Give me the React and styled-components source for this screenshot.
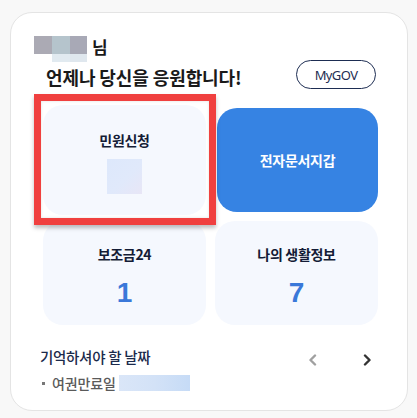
import React from "react";
import styled, { createGlobalStyle } from "styled-components";

const Global = createGlobalStyle`
  html, body { margin: 0; padding: 0; background: #f8f8f8; }
  body { font-family: "Noto Sans CJK KR", "Noto Sans", sans-serif; }
  * { box-sizing: border-box; }
`;

const Page = styled.div`
  width: 417px;
  height: 418px;
  padding: 12px 9px 7px 10px;
`;

const Card = styled.div`
  position: relative;
  width: 398px;
  height: 399px;
  background: #fff;
  border: 1px solid #e4e4e4;
  border-radius: 22px;
  padding: 23px 31px 0 31px;
`;

const Header = styled.div`
  display: flex;
  justify-content: space-between;
  align-items: flex-end;
  height: 53px;
`;

const Greeting = styled.div`
  display: flex;
  flex-direction: column;
  align-items: flex-start;
  gap: 3px;
`;

const NameLine = styled.div`
  display: flex;
  align-items: flex-start;
  height: 26px;
  margin-left: -8px;
`;

const Mosaic = styled.div`
  display: grid;
  grid-template-columns: repeat(3, 18px);
  grid-template-rows: 18px 8px;
  width: 53px;
  overflow: hidden;
`;

const Px = styled.div`
  background: ${(p) => p.$c};
`;

const Nim = styled.span`
  font-size: 17px;
  font-weight: 700;
  color: #1a1a1a;
  line-height: 20px;
  margin-left: 5px;
  margin-top: 1px;
`;

const Title = styled.div`
  font-size: 18px;
  font-weight: 700;
  color: #1a1a1a;
  line-height: 24px;
  letter-spacing: -0.1px;
  margin-left: 4px;
`;

const MyGov = styled.button`
  width: 80px;
  height: 29px;
  border: 1.5px solid #1d2d52;
  border-radius: 15px;
  background: #fff;
  color: #1d2d52;
  font-family: "Noto Sans", sans-serif;
  font-size: 13px;
  letter-spacing: -0.6px;
  padding: 0;
`;

const Grid = styled.div`
  display: grid;
  grid-template-columns: 163px 163px;
  grid-template-rows: 104px 104px;
  column-gap: 9px;
  row-gap: 9px;
  margin: 19px 0 0 1px;
`;

const Tile = styled.div`
  border-radius: 20px;
  background: ${(p) => (p.$primary ? "#3683e3" : "#f5f8fe")};
  color: ${(p) => (p.$primary ? "#fff" : "#141c36")};
  display: flex;
  flex-direction: column;
  align-items: center;
  justify-content: center;
  gap: ${(p) => p.$gap || 0}px;
  padding-top: ${(p) => p.$pt || 0}px;
  margin: ${(p) => (p.$lifted ? "-3px 0 -3px 1px" : "0")};
  margin-left: ${(p) => p.$ml || 0}px;
`;

const TileLabel = styled.div`
  font-size: 14px;
  font-weight: 700;
  line-height: 18px;
  letter-spacing: -0.3px;
`;

const Count = styled.div`
  font-family: "Liberation Sans", Arial, sans-serif;
  font-size: 28px;
  font-weight: 700;
  color: #3a78d9;
  line-height: 30px;
`;

const BlurSquare = styled.div`
  width: 35px;
  height: 35px;
  background: linear-gradient(135deg, #dde8fb 0%, #e0e9fb 55%, #e8e6f6 100%);
`;

const Highlight = styled.div`
  position: absolute;
  left: 23px;
  top: 81px;
  width: 182px;
  height: 131px;
  border: 7px solid #f0403f;
  box-shadow: 0 3px 4px rgba(0, 0, 0, 0.25), inset 0 0 3px rgba(0, 0, 0, 0.12);
  pointer-events: none;
`;

const Dates = styled.div`
  margin-top: 20px;
`;

const DatesHead = styled.div`
  display: flex;
  align-items: center;
  justify-content: space-between;
  height: 22px;
`;

const DatesTitle = styled.div`
  font-size: 14.5px;
  font-weight: 500;
  color: #1b2a4b;
  letter-spacing: -0.3px;
  margin-left: -2px;
`;

const Arrows = styled.div`
  display: flex;
  gap: 46px;
  margin-top: 8px;
  margin-right: 4px;
`;

const DateItem = styled.div`
  display: flex;
  align-items: center;
  margin-top: 4px;
  height: 24px;
  font-size: 14px;
  font-weight: 500;
  color: #5a5a5a;
  letter-spacing: -0.1px;
`;

const Bullet = styled.span`
  width: 3px;
  height: 3px;
  background: #777;
  margin: 0 7px 0 0;
`;

const BlurBar = styled.span`
  width: 71px;
  height: 16px;
  margin-left: 3px;
  background: linear-gradient(90deg, #dae6f8 0%, #d3e2f7 50%, #c6dbf6 100%);
`;

const Chevron = ({ dir, color }) => (
  <svg width="9" height="12" viewBox="0 0 9 12">
    <polyline
      points={dir === "left" ? "7,1.5 2.5,6 7,10.5" : "2,1.5 6.5,6 2,10.5"}
      fill="none"
      stroke={color}
      strokeWidth="2.4"
      strokeLinecap="round"
      strokeLinejoin="round"
    />
  </svg>
);

export default function App() {
  return (
    <>
      <Global />
      <Page>
        <Card>
          <Header>
            <Greeting>
              <NameLine>
                <Mosaic>
                  <Px $c="#abaab4" />
                  <Px $c="#b5c4cc" />
                  <Px $c="#a8a9b6" />
                  <Px $c="#fff" />
                  <Px $c="#e1eaf0" />
                  <Px $c="#dfe7ee" />
                </Mosaic>
                <Nim>님</Nim>
              </NameLine>
              <Title>언제나 당신을 응원합니다!</Title>
            </Greeting>
            <MyGov>MyGOV</MyGov>
          </Header>
          <Grid>
            <Tile $gap={10} $pt={4} $lifted>
              <TileLabel>민원신청</TileLabel>
              <BlurSquare />
            </Tile>
            <Tile $primary $ml={2}>
              <TileLabel>전자문서지갑</TileLabel>
            </Tile>
            <Tile $gap={15} $pt={6}>
              <TileLabel>보조금24</TileLabel>
              <Count>1</Count>
            </Tile>
            <Tile $gap={15} $pt={6}>
              <TileLabel>나의 생활정보</TileLabel>
              <Count>7</Count>
            </Tile>
          </Grid>
          <Dates>
            <DatesHead>
              <DatesTitle>기억하셔야 할 날짜</DatesTitle>
              <Arrows>
                <Chevron dir="left" color="#a0a0a0" />
                <Chevron dir="right" color="#333" />
              </Arrows>
            </DatesHead>
            <DateItem>
              <Bullet />
              여권만료일
              <BlurBar />
            </DateItem>
          </Dates>
          <Highlight />
        </Card>
      </Page>
    </>
  );
}
